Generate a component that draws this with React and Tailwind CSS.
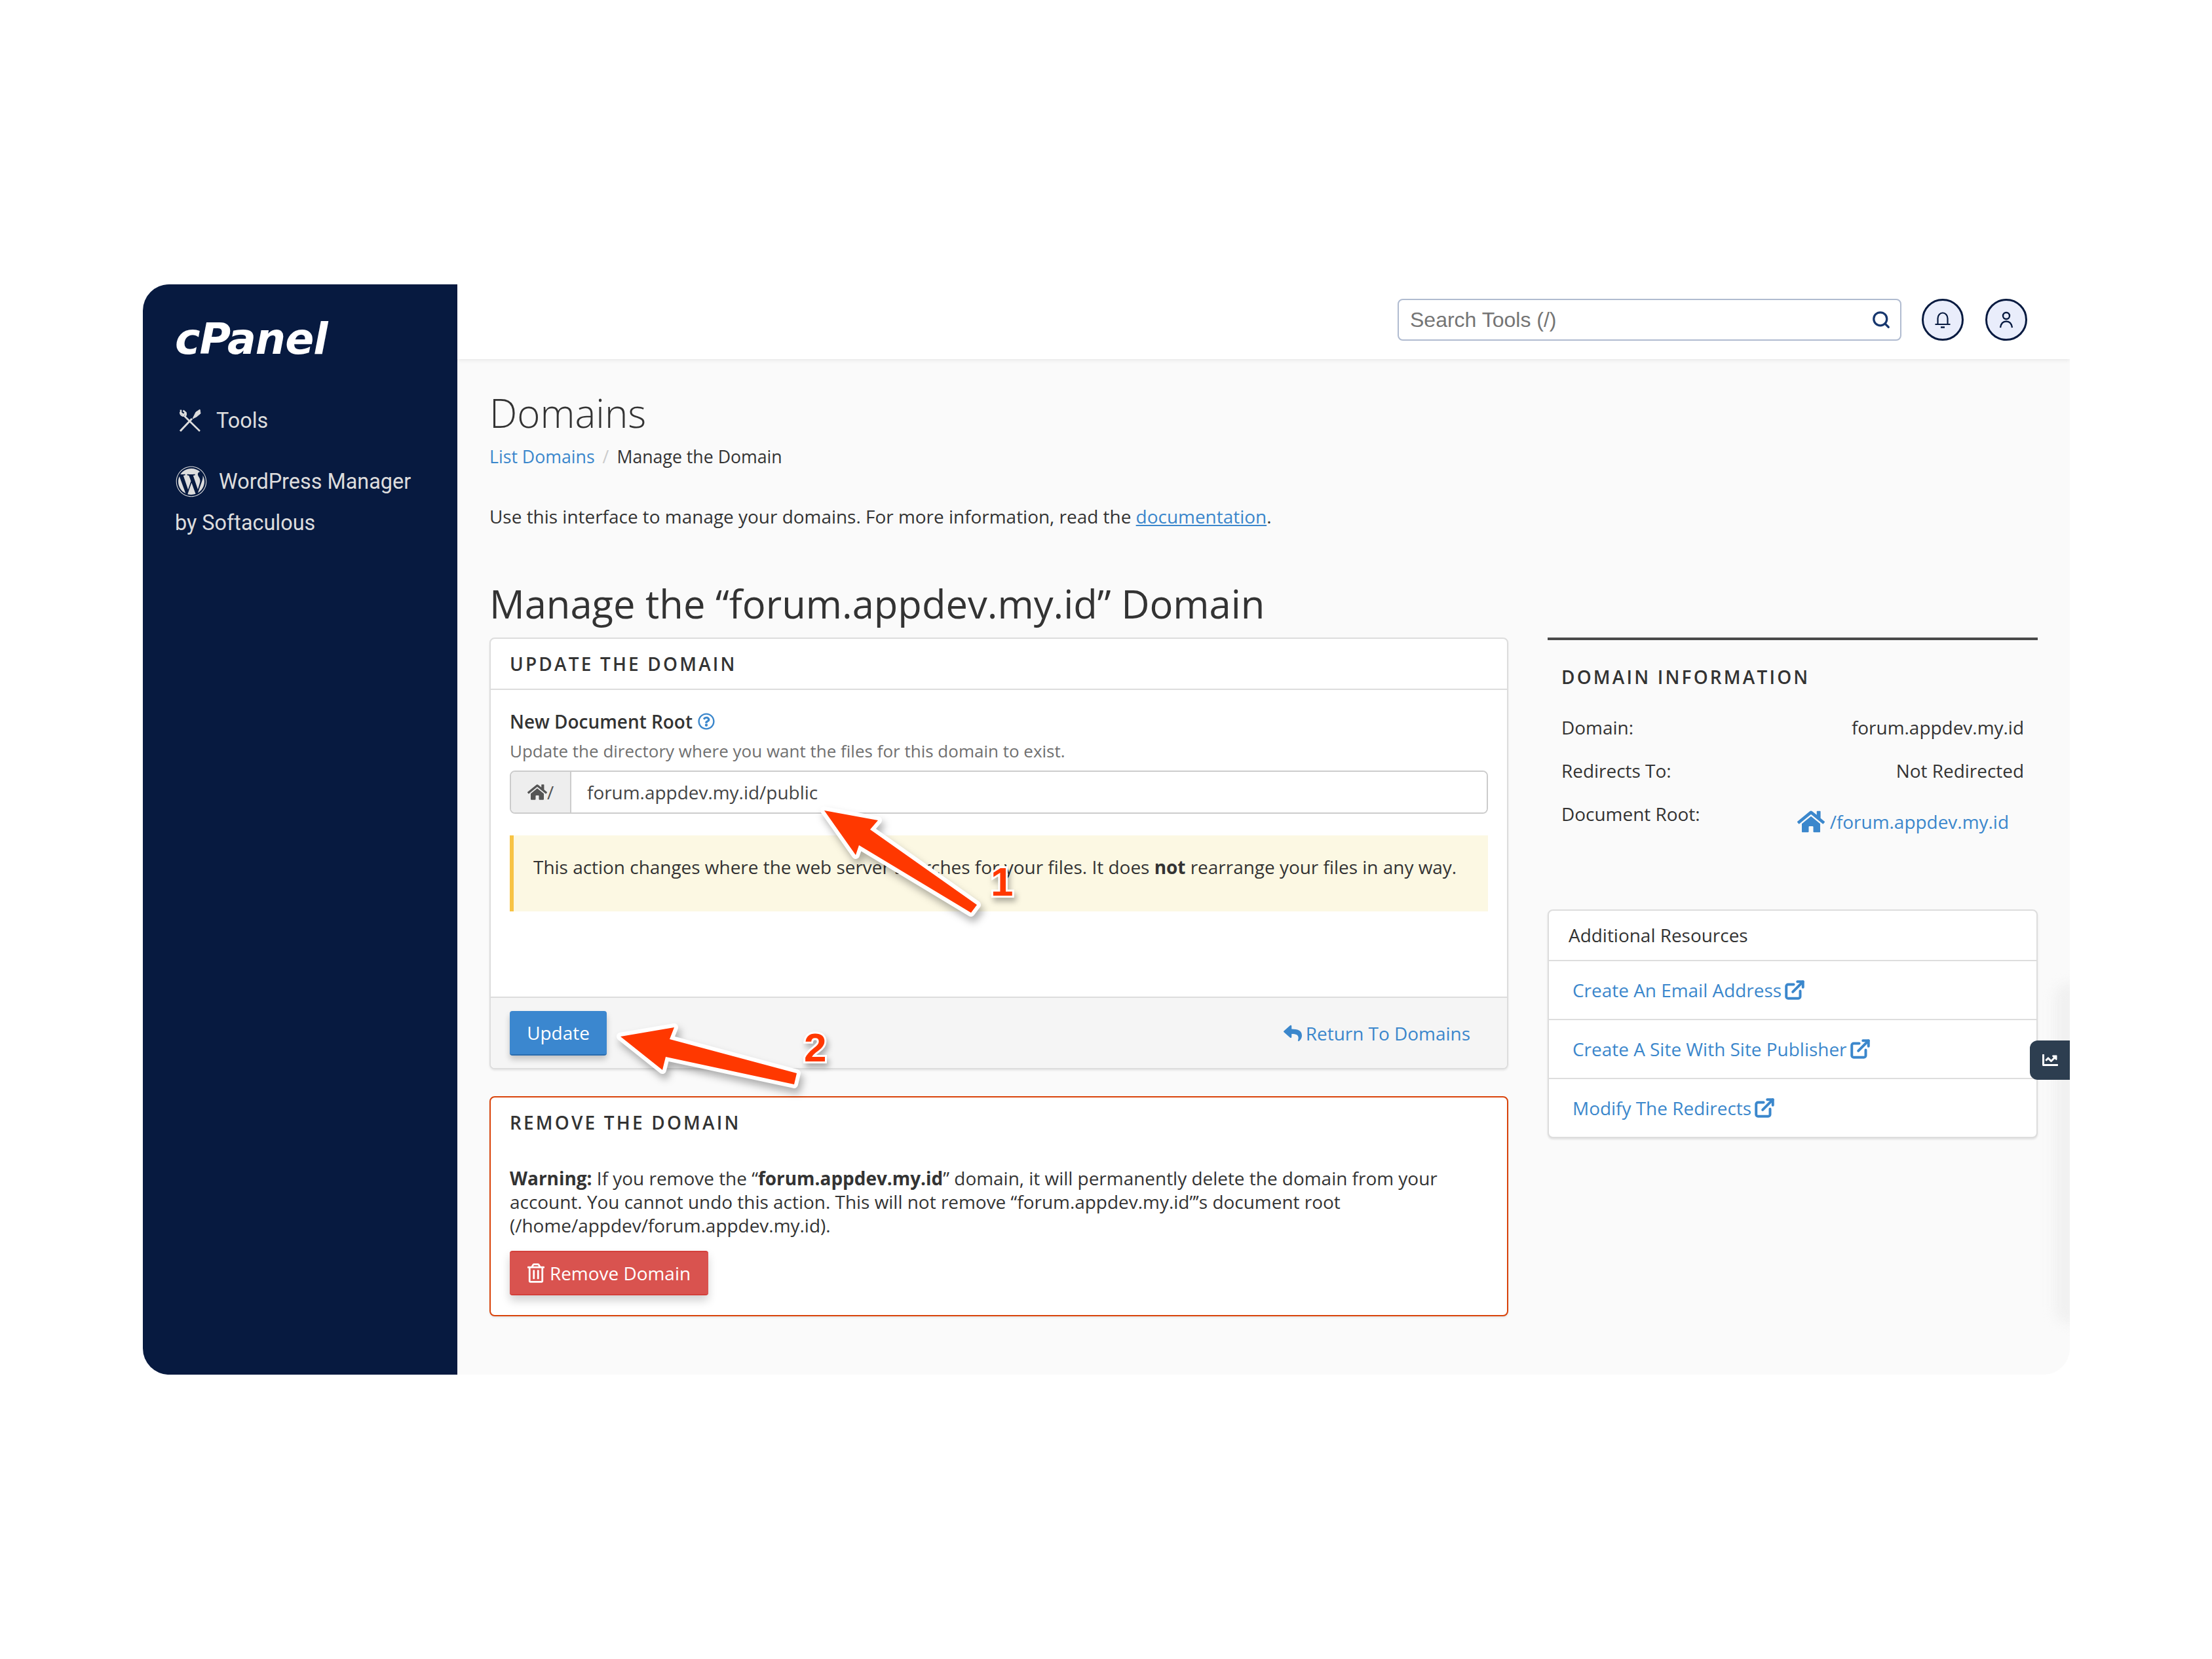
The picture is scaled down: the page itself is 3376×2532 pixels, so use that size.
import React from 'react';
import { Search, ExternalLink } from 'lucide-react';
import { FaWordpress, FaHome, FaRegQuestionCircle, FaReply, FaRegTrashAlt, FaChartLine } from 'react-icons/fa';

const ToolsIcon = () => (
    <svg viewBox="0 0 36 36" className="w-[36px] h-[36px] text-[#dddddd]" fill="none" stroke="currentColor">
        {/* wrench */}
        <path d="M4 1.5 L4 6 L8 9 L11.5 6 L7.5 2.5 M11.5 6 Q12.5 9.5 10 11.5 L33 34" strokeWidth="2.6" strokeLinejoin="round" />
        <path d="M3 5 Q3 11 9.5 11" strokeWidth="2.2" />
        {/* screwdriver */}
        <path d="M3 34 L21 15" strokeWidth="3" />
        <path d="M22 15 L27 5 L33 1 L34 7 L28 12 Z" fill="currentColor" strokeWidth="1" />
    </svg>
);

const BellIcon = () => (
    <svg viewBox="0 0 26 26" className="w-[26px] h-[26px] text-[#071a40]" fill="none" stroke="currentColor" strokeWidth="2.2">
        <path d="M5.5 19 V11 A7.5 8.5 0 0 1 20.5 11 V19" />
        <path d="M1.5 20 H24.5" />
        <path d="M10 24.5 H16" strokeWidth="2.6" />
    </svg>
);

const UserIcon = () => (
    <svg viewBox="0 0 26 26" className="w-[26px] h-[26px] text-[#071a40]" fill="none" stroke="currentColor" strokeWidth="2.4">
        <circle cx="13" cy="7" r="5" />
        <path d="M4 25 C5 18 9 15.5 13 15.5 C17 15.5 21 18 22 25" />
    </svg>
);

// red call-out arrow, coordinates are page pixels
const Arrow = ({ points }) => (
    <svg viewBox="0 0 3376 2532" className="absolute left-0 top-0 w-[3376px] h-[2532px] pointer-events-none drop-shadow-[4px_8px_6px_rgba(0,0,0,0.3)]">
        <polygon points={points} fill="#ff3800" stroke="#ffffff" strokeWidth="12" strokeLinejoin="round" paintOrder="stroke" />
    </svg>
);

const LinkRow = ({ label }) => (
    <a className="h-[90px] flex items-center pl-[36px] border-t-2 border-[#dddddd] text-[#3b87cc]">
        {label}
        <ExternalLink className="w-[34px] h-[34px] ml-[3px]" strokeWidth={2.8} />
    </a>
);

const App = () => {
    return (
        <div className="relative w-[3376px] h-[2532px] bg-white overflow-hidden font-['Open_Sans',sans-serif] text-[27.95px] leading-[40px] text-[#333333]">
            <div className="absolute left-[218px] top-[434px] w-[2941px] h-[1664px] flex bg-[#fafafa] rounded-[40px] rounded-tr-none overflow-hidden">
                {/* Sidebar */}
                <aside className="w-[480px] shrink-0 bg-[#071a40] pl-[49px] pt-[48px] font-['Roboto',sans-serif] text-[32.4px] text-[#dddddd]">
                    <div className="h-[60px] mt-[6px] -mb-[6px] flex items-center font-['DejaVu_Sans',sans-serif] font-bold italic text-[65px] tracking-[-1px] text-white">cPanel</div>
                    <div className="mt-[80px] h-[40px] pl-[5px] flex items-center">
                        <ToolsIcon />
                        <span className="ml-[22px]">Tools</span>
                    </div>
                    <div className="mt-[53px] h-[40px] flex items-center">
                        <FaWordpress className="w-[48px] h-[48px] ml-px" />
                        <span className="ml-[18px]">WordPress Manager</span>
                    </div>
                    <div className="mt-[23px] h-[40px] flex items-center">by Softaculous</div>
                </aside>

                {/* Main */}
                <main className="relative flex-1 min-w-0">
                    <header className="relative h-[114px] bg-white shadow-[0_2px_6px_rgba(0,0,0,0.08)] flex items-center justify-end pr-[65px] pb-[6px] gap-[33px]">
                        <div className="relative w-[769px] h-[64px] -mr-[2px]">
                            <input
                                placeholder="Search Tools (/)"
                                className="w-full h-full bg-white border-2 border-[#b0bbd0] rounded-[8px] pl-[17px] pr-[50px] font-['Liberation_Sans',sans-serif] text-[32px] outline-none placeholder:text-[#757575]"
                            />
                            <Search className="absolute right-[16px] top-[17px] w-[30px] h-[30px] text-[#17376e]" strokeWidth={2.6} />
                        </div>
                        <div className="w-[64px] h-[64px] rounded-full border-[3px] border-[#071a40] bg-[#e9edfb] flex items-center justify-center">
                            <BellIcon />
                        </div>
                        <div className="w-[64px] h-[64px] rounded-full border-[3px] border-[#071a40] bg-[#e9edfb] flex items-center justify-center">
                            <UserIcon />
                        </div>
                    </header>

                    <div className="pl-[49px] pt-[47px]">
                        <h1 className="text-[60px] leading-[70px] font-light">Domains</h1>
                        <div className="mt-[12px] flex items-center text-[26.7px]">
                            <a className="text-[#3b87cc]">List Domains</a>
                            <span className="mx-[12px] text-[#cccccc]">/</span>
                            <span>Manage the Domain</span>
                        </div>
                        <p className="mt-[51px]">
                            Use this interface to manage your domains. For more information, read the <a className="text-[#3b87cc] underline">documentation</a>.
                        </p>
                        <h2 className="mt-[78px] text-[59.7px] leading-[70px]">Manage the “forum.appdev.my.id” Domain</h2>

                        <div className="mt-[17px] flex items-start">
                            {/* Left column */}
                            <div className="w-[1555px] shrink-0">
                                <section className="bg-white border-2 border-[#dddddd] rounded-[8px] overflow-hidden shadow-[0_2px_3px_rgba(0,0,0,0.08)]">
                                    <div className="h-[78px] border-b-2 border-[#dddddd] px-[29px] flex items-center font-semibold tracking-[3.2px] uppercase">Update the Domain</div>
                                    <div className="px-[29px] pt-[28px] h-[468px]">
                                        <div className="flex items-center font-semibold">
                                            New Document Root
                                            <FaRegQuestionCircle className="w-[26px] h-[26px] ml-[8px] text-[#3b87cc]" />
                                        </div>
                                        <p className="mt-[5px] text-[#707070] text-[26px]">Update the directory where you want the files for this domain to exist.</p>
                                        <div className="mt-[10px] h-[66px] flex border-2 border-[#cccccc] rounded-[8px] overflow-hidden">
                                            <div className="w-[92px] bg-[#eeeeee] border-r-2 border-[#cccccc] flex items-center justify-center text-[#555555]">
                                                <FaHome className="w-[30px] h-[30px]" />/
                                            </div>
                                            <input readOnly value="forum.appdev.my.id/public" className="flex-1 pl-[24px] outline-none bg-white text-[#444444]" />
                                        </div>
                                        <div className="mt-[33px] h-[116px] bg-[#fcf8e3] border-l-[6px] border-[#f7c344] pl-[30px] pb-[20px] flex items-center">
                                            <span>This action changes where the web server searches for your files. It does <b>not</b> rearrange your files in any way.</span>
                                        </div>
                                    </div>
                                    <div className="h-[109px] border-t-2 border-[#dddddd] bg-[#f5f5f5] px-[29px] pr-[56px] flex items-center justify-between">
                                        <button className="w-[148px] h-[68px] bg-[#3b87cf] border-b-2 border-[#2a6cae] rounded-[4px] text-white shadow-[0_6px_10px_rgba(0,0,0,0.2)]">Update</button>
                                        <a className="flex items-center text-[#3b87cc]"><FaReply className="w-[28px] h-[28px] mr-[6px]" />Return To Domains</a>
                                    </div>
                                </section>

                                <section className="mt-[41px] h-[336px] bg-white border-2 border-[#d9430a] rounded-[8px] px-[29px] pt-[18px] shadow-[0_2px_3px_rgba(0,0,0,0.08)]">
                                    <div className="font-semibold tracking-[3.2px] uppercase">Remove the Domain</div>
                                    <p className="mt-[47px] leading-[36px]">
                                        <b>Warning:</b> If you remove the “<b>forum.appdev.my.id</b>” domain, it will permanently delete the domain from your account. You cannot undo this action. This will not remove “forum.appdev.my.id”’s document root (/home/appdev/forum.appdev.my.id).
                                    </p>
                                    <button className="mt-[21px] h-[68px] w-[303px] bg-[#d9534f] border-y-2 border-[#d43f3a] rounded-[4px] text-white flex items-center justify-center shadow-[0_8px_14px_rgba(0,0,0,0.18)]">
                                        <FaRegTrashAlt className="w-[26px] h-[30px] mr-[8px]" />Remove Domain
                                    </button>
                                </section>
                            </div>

                            {/* Right column */}
                            <div className="ml-[60px] w-[748px] shrink-0">
                                <div className="border-t-4 border-[#4a4a4a] px-[21px] pt-[36px]">
                                    <div className="font-semibold tracking-[3.2px] uppercase">Domain Information</div>
                                    <div className="mt-[37px] flex justify-between"><span>Domain:</span><span>forum.appdev.my.id</span></div>
                                    <div className="mt-[26px] flex justify-between"><span>Redirects To:</span><span>Not Redirected</span></div>
                                    <div className="mt-[26px] flex justify-between">
                                        <span>Document Root:</span>
                                        <a className="mt-[12px] pr-[23px] flex items-center text-[#3b87cc]"><FaHome className="w-[42px] h-[38px] mr-[8px]" />/forum.appdev.my.id</a>
                                    </div>
                                </div>
                                <div className="mt-[114px] bg-white border-2 border-[#dddddd] rounded-[8px] shadow-[0_2px_3px_rgba(0,0,0,0.1)]">
                                    <div className="h-[76px] flex items-center pl-[30px] -mt-px">Additional Resources</div>
                                    <LinkRow label="Create An Email Address" />
                                    <LinkRow label="Create A Site With Site Publisher" />
                                    <LinkRow label="Modify The Redirects" />
                                </div>
                            </div>
                        </div>
                    </div>

                    {/* Faint edge shadow and stats tab on the window edge */}
                    <div className="absolute -right-[12px] top-[1066px] w-[36px] h-[520px] rounded-l-[24px] bg-[#f1f1f1] blur-[8px]"></div>
                    <div className="absolute right-0 top-[1154px] w-[61px] h-[60px] bg-[#2d3e50] rounded-l-[12px] flex items-center justify-center text-white">
                        <FaChartLine className="w-[24px] h-[24px]" />
                    </div>
                </main>
            </div>

            {/* Annotations */}
            <Arrow points="1258,1237 1340,1252 1328,1266 1491,1381 1482,1393 1311,1290 1306,1305" />
            <Arrow points="947,1582 1029,1568 1022,1586 1216,1638 1212,1655 1016,1613 1011,1633" />
            <span className="absolute left-[1512px] top-[1310px] font-['Liberation_Sans',sans-serif] font-bold text-[62px] leading-[72px] text-[#ff3800] [-webkit-text-stroke:6px_white] [paint-order:stroke_fill] drop-shadow-[3px_6px_4px_rgba(0,0,0,0.3)]">1</span>
            <span className="absolute left-[1227px] top-[1563px] font-['Liberation_Sans',sans-serif] font-bold text-[62px] leading-[72px] text-[#ff3800] [-webkit-text-stroke:6px_white] [paint-order:stroke_fill] drop-shadow-[3px_6px_4px_rgba(0,0,0,0.3)]">2</span>
        </div>
    );
};

export default App;
